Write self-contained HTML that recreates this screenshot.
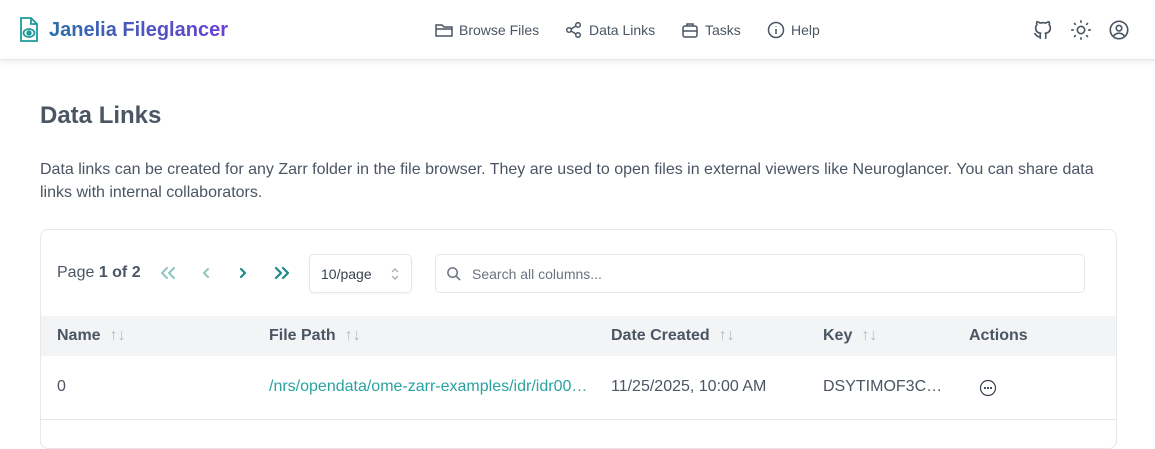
<!DOCTYPE html>
<html><head><meta charset="utf-8"><style>
*{box-sizing:border-box;margin:0;padding:0}
body{width:1155px;height:428px;overflow:hidden;background:#fff;font-family:"Liberation Sans",sans-serif;color:#4b5563;position:relative}
.hdr{position:absolute;left:0;top:0;width:1155px;height:60px;background:#fff;border-bottom:1px solid #e5e7eb;box-shadow:0 2px 5px rgba(0,0,0,.08)}
.logo{position:absolute;left:19px;top:17px}
.brand{position:absolute;left:49px;top:19px;font-size:20px;font-weight:bold;background:linear-gradient(90deg,#2b6ea8,#6a3fd6);-webkit-background-clip:text;color:transparent}
.nav{position:absolute;top:21px;font-size:14px;color:#4b5563;display:flex;align-items:center;gap:6px;height:18px}
.ic{position:absolute;top:19px}
h1{position:absolute;left:40px;top:102px;font-size:24px;font-weight:bold;color:#4b5563}
p.d{position:absolute;left:40px;top:158px;width:1080px;font-size:16px;line-height:23px;color:#4b5563}
.card{position:absolute;left:40px;top:229px;width:1077px;height:220px;border:1px solid #e5e7eb;border-radius:8px;overflow:hidden}
.t{position:absolute;white-space:nowrap}
.th{position:absolute;left:0;top:86px;width:100%;height:40px;background:#f3f4f6}
.hd{font-weight:bold;font-size:16px;color:#4b5563;top:97px}
.ar{color:#b5b9bf;font-weight:normal;font-size:16px;margin-left:9px}
.cell{font-size:16px;top:148px;color:#4b5563}
.pg{position:absolute;top:36px}
</style></head><body>
<div class="hdr">
<svg class="logo" width="20" height="26" viewBox="0 0 20 26" fill="none" stroke="#1f9a9a" stroke-width="1.8"><path d="M2 1h10l6 6v17H2z"/><path d="M12 1v6h6" /><ellipse cx="10" cy="16" rx="5.5" ry="4"/><circle cx="10" cy="16" r="1.8" fill="#1f9a9a"/></svg>
<div class="brand">Janelia Fileglancer</div>
<div class="nav" style="left:435px"><svg width="18" height="16" viewBox="0 0 18 16" fill="none" stroke="#4b5563" stroke-width="1.5"><path d="M1 3h6l2 2h8v9H1z M1 7h16"/></svg>Browse Files</div>
<div class="nav" style="left:565px"><svg width="18" height="16" viewBox="0 0 18 16" fill="none" stroke="#4b5563" stroke-width="1.5"><circle cx="4" cy="8" r="2.3"/><circle cx="13" cy="3" r="2.3"/><circle cx="13" cy="13" r="2.3"/><path d="M6 7l5-3M6 9l5 3"/></svg>Data Links</div>
<div class="nav" style="left:681px"><svg width="18" height="16" viewBox="0 0 18 16" fill="none" stroke="#4b5563" stroke-width="1.5"><rect x="2" y="4" width="14" height="11" rx="2"/><path d="M6 4V2h6v2M2 9h14"/></svg>Tasks</div>
<div class="nav" style="left:767px"><svg width="18" height="18" viewBox="0 0 18 18" fill="none" stroke="#4b5563" stroke-width="1.5"><circle cx="9" cy="9" r="7.5"/><path d="M9 8v5M9 5.5v.5"/></svg>Help</div>
<svg class="ic" style="left:1032px" width="22" height="22" viewBox="0 0 24 24" fill="none" stroke="#4b5563" stroke-width="1.8" stroke-linecap="round" stroke-linejoin="round"><path d="M9 19c-4.3 1.4-4.3-2.5-6-3m12 5v-3.5c0-1 .1-1.4-.5-2 2.8-.3 5.5-1.4 5.5-6a4.6 4.6 0 0 0-1.3-3.2 4.2 4.2 0 0 0-.1-3.2s-1.1-.3-3.5 1.3a12.3 12.3 0 0 0-6.2 0C6.5 2.8 5.4 3.1 5.4 3.1a4.2 4.2 0 0 0-.1 3.2A4.6 4.6 0 0 0 4 9.5c0 4.6 2.7 5.7 5.5 6-.6.6-.6 1.2-.5 2V21"/></svg>
<svg class="ic" style="left:1070px" width="22" height="22" viewBox="0 0 24 24" fill="none" stroke="#4b5563" stroke-width="1.8" stroke-linecap="round"><circle cx="12" cy="12" r="4"/><path d="M12 2v1.5M12 20.5V22M2 12h1.5M20.5 12H22M4.9 4.9l1 1M18.1 18.1l1 1M4.9 19.1l1-1M18.1 5.9l1-1"/></svg>
<svg class="ic" style="left:1108px" width="22" height="22" viewBox="0 0 24 24" fill="none" stroke="#4b5563" stroke-width="1.8"><circle cx="12" cy="12" r="9.5"/><circle cx="12" cy="10" r="3"/><path d="M6.2 18.5c1.5-2 3.5-3 5.8-3s4.3 1 5.8 3"/></svg>
</div>
<h1>Data Links</h1>
<p class="d">Data links can be created for any Zarr folder in the file browser. They are used to open files in external viewers like Neuroglancer. You can share data links with internal collaborators.</p>
<div class="card">
<div class="t" style="left:16px;top:34px;font-size:16px">Page <b>1 of 2</b></div>
<svg class="pg" style="left:119px" width="16" height="14" viewBox="0 0 16 14" fill="none" stroke="#8fc5bf" stroke-width="2" stroke-linecap="round" stroke-linejoin="round"><path d="M7 2L2 7l5 5M14 2L9 7l5 5"/></svg>
<svg class="pg" style="left:160px" width="10" height="14" viewBox="0 0 10 14" fill="none" stroke="#8fc5bf" stroke-width="2" stroke-linecap="round" stroke-linejoin="round"><path d="M7 3L3 7l4 4"/></svg>
<svg class="pg" style="left:197px" width="10" height="14" viewBox="0 0 10 14" fill="none" stroke="#1c8a89" stroke-width="2.2" stroke-linecap="round" stroke-linejoin="round"><path d="M3 3l4 4-4 4"/></svg>
<svg class="pg" style="left:233px" width="16" height="14" viewBox="0 0 16 14" fill="none" stroke="#1c8a89" stroke-width="2.2" stroke-linecap="round" stroke-linejoin="round"><path d="M2 2l5 5-5 5M9 2l5 5-5 5"/></svg>
<div style="position:absolute;left:268px;top:24px;width:103px;height:39px;border:1px solid #e5e7eb;border-radius:5px;box-shadow:0 1px 2px rgba(0,0,0,.05)"><span class="t" style="left:11px;top:11px;font-size:14px;color:#374151">10/page</span><svg style="position:absolute;left:81px;top:12px" width="8" height="14" viewBox="0 0 8 14" fill="none" stroke="#9ca3af" stroke-width="1.2"><path d="M1 5l3-3 3 3M1 9l3 3 3-3"/></svg></div>
<div style="position:absolute;left:394px;top:24px;width:650px;height:39px;border:1px solid #e5e7eb;border-radius:5px"><svg style="position:absolute;left:10px;top:11px" width="15" height="15" viewBox="0 0 16 16" fill="none" stroke="#6b7280" stroke-width="1.6"><circle cx="7" cy="7" r="5"/><path d="M11 11l4 4"/></svg><span class="t" style="left:36px;top:11px;font-size:14px;color:#6b7280">Search all columns...</span></div>
<div class="th"></div>
<div class="t hd" style="left:16px">Name<span class="ar">↑↓</span></div>
<div class="t hd" style="left:228px">File Path<span class="ar">↑↓</span></div>
<div class="t hd" style="left:570px">Date Created<span class="ar">↑↓</span></div>
<div class="t hd" style="left:782px">Key<span class="ar">↑↓</span></div>
<div class="t hd" style="left:928px">Actions</div>
<div class="t cell" style="left:16px">0</div>
<div class="t cell" style="left:228px;color:#2aa3a0">/nrs/opendata/ome-zarr-examples/idr/idr00…</div>
<div class="t cell" style="left:570px">11/25/2025, 10:00 AM</div>
<div class="t cell" style="left:782px">DSYTIMOF3C…</div>
<svg style="position:absolute;left:938px;top:149px" width="18" height="18" viewBox="0 0 18 18" fill="none" stroke="#374151" stroke-width="1.2"><circle cx="9" cy="9" r="7.5"/><circle cx="6" cy="9" r=".5" fill="#374151"/><circle cx="9" cy="9" r=".5" fill="#374151"/><circle cx="12" cy="9" r=".5" fill="#374151"/></svg>
<div style="position:absolute;left:0;top:189px;width:100%;border-top:1px solid #e5e7eb"></div>
</div>
</body></html>
